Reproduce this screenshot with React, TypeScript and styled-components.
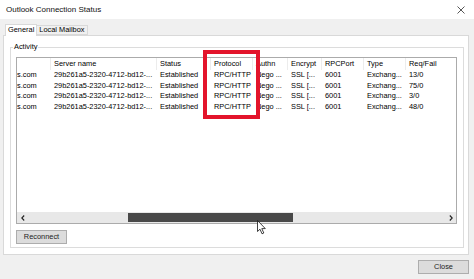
import React from "react";
import styled, { createGlobalStyle } from "styled-components";

const Global = createGlobalStyle`
  html, body { margin: 0; padding: 0; background: #f0f0f0; }
  body { width: 474px; height: 279px; overflow: hidden; font-family: "Liberation Sans", Arial, sans-serif; }
  * { box-sizing: border-box; }
`;

const COLS = "33px 106px 54px 42px 35px 34px 42px 42px 1fr";

const Window = styled.div`
  width: 474px;
  height: 279px;
  display: flex;
  flex-direction: column;
  background: #f0f0f0;
  color: #000;
  font-size: 7.4px;
  position: relative;
  overflow: hidden;
`;

const TitleBar = styled.div`
  height: 19px;
  flex: none;
  background: #fff;
  display: flex;
  align-items: center;
  justify-content: space-between;
  padding: 0 9px 0 6px;
`;

const Title = styled.span`
  font-size: 8px;
  line-height: 10px;
  color: #111;
  margin-top: 1px;
`;

const Body = styled.div`
  padding: 5px 5px 0 3px;
  display: flex;
  flex-direction: column;
`;

const TabStrip = styled.div`
  display: flex;
  align-items: flex-end;
  height: 11px;
  padding-left: 2px;
  position: relative;
  z-index: 1;
`;

const Tab = styled.div<{ $active?: boolean }>`
  height: ${(p) => (p.$active ? "12px" : "10px")};
  margin-bottom: ${(p) => (p.$active ? "-1px" : "0")};
  margin-left: ${(p) => (p.$active ? "0" : "-1px")};
  padding: 0 2px;
  border: 1px solid #d9d9d9;
  border-bottom: ${(p) => (p.$active ? "none" : "1px solid #d9d9d9")};
  background: ${(p) => (p.$active ? "#fff" : "#f0f0f0")};
  line-height: ${(p) => (p.$active ? "10px" : "8px")};
  white-space: nowrap;
`;

const Panel = styled.div`
  border: 1px solid #d9d9d9;
  background: #fff;
  padding: 6px 4px 6px 6px;
`;

const Group = styled.fieldset`
  margin: 0;
  min-width: 0;
  border: 1px solid #dcdcdc;
  padding: 5px 6px 3px 5px;
`;

const Legend = styled.legend`
  padding: 0 1px;
  margin-left: -3px;
  line-height: 10px;
  font-size: 7.4px;
`;

const List = styled.div`
  height: 167px;
  border: 1px solid #ababab;
  background: #fff;
  display: flex;
  flex-direction: column;
  overflow: hidden;
`;

const HeaderRow = styled.div`
  display: grid;
  grid-template-columns: ${COLS};
  height: 12px;
  flex: none;
`;

const HeaderCell = styled.div<{ $first?: boolean }>`
  padding-left: ${(p) => (p.$first ? "0" : "3px")};
  border-left: ${(p) => (p.$first ? "none" : "1px solid #ececec")};
  line-height: 12px;
  white-space: nowrap;
  overflow: hidden;
`;

const Row = styled.div`
  display: grid;
  grid-template-columns: ${COLS};
  height: 10.5px;
  flex: none;
`;

const Cell = styled.div<{ $first?: boolean }>`
  padding-left: ${(p) => (p.$first ? "0" : "4px")};
  line-height: 10.5px;
  white-space: nowrap;
  overflow: hidden;
`;

const Scrollbar = styled.div`
  margin-top: auto;
  height: 11px;
  flex: none;
  display: flex;
  background: #e8e8e8;
`;

const Arrow = styled.div`
  width: 11px;
  display: flex;
  align-items: center;
  justify-content: center;
`;

const Track = styled.div`
  flex: 1;
  display: flex;
  align-items: stretch;
  padding: 1px 0;
`;

const Thumb = styled.div<{ $offset: number; $size: number }>`
  margin-left: ${(p) => p.$offset}px;
  width: ${(p) => p.$size}px;
  background: #494949;
`;

const Button = styled.button<{ $width?: number }>`
  width: ${(p) => p.$width ?? 51}px;
  height: 14px;
  border: 1px solid #adadad;
  background: #dcdcdc;
  font-family: "Liberation Sans", Arial, sans-serif;
  font-size: 7.4px;
  color: #222;
  padding: 0;
  line-height: 12px;
`;

const ReconnectButton = styled(Button)`
  margin-top: 6px;
  display: block;
`;

const Footer = styled.div`
  display: flex;
  justify-content: flex-end;
  padding: 5px 5px 0 0;
`;

const Highlight = styled.div`
  position: absolute;
  left: 203px;
  top: 50px;
  width: 57px;
  height: 69px;
  border: 4px solid #e3142b;
  pointer-events: none;
`;

const Cursor = styled.svg`
  position: absolute;
  left: 257px;
  top: 220px;
`;

const headers = ["", "Server name", "Status", "Protocol", "Authn", "Encrypt", "RPCPort", "Type", "Req/Fail"];
const reqs = ["13/0", "75/0", "3/0", "48/0"];

export default function App() {
  return (
    <Window>
      <Global />
      <TitleBar>
        <Title>Outlook Connection Status</Title>
        <svg width="8" height="8" viewBox="0 0 8 8">
          <path d="M0.5 0.5 L7.5 7.5 M7.5 0.5 L0.5 7.5" stroke="#444" strokeWidth="0.9" fill="none" />
        </svg>
      </TitleBar>
      <Body>
        <TabStrip>
          <Tab $active>General</Tab>
          <Tab>Local Mailbox</Tab>
        </TabStrip>
        <Panel>
          <Group>
            <Legend>Activity</Legend>
            <List>
              <HeaderRow>
                {headers.map((h, i) => (
                  <HeaderCell key={i} $first={i === 0}>
                    {h}
                  </HeaderCell>
                ))}
              </HeaderRow>
              {reqs.map((r) => (
                <Row key={r}>
                  <Cell $first>s.com</Cell>
                  <Cell>29b261a5-2320-4712-bd12-...</Cell>
                  <Cell>Established</Cell>
                  <Cell>RPC/HTTP</Cell>
                  <Cell>Nego ...</Cell>
                  <Cell>SSL [...</Cell>
                  <Cell>6001</Cell>
                  <Cell>Exchang...</Cell>
                  <Cell>{r}</Cell>
                </Row>
              ))}
              <Scrollbar>
                <Arrow>
                  <svg width="4" height="6" viewBox="0 0 4 6">
                    <path d="M3.2 0.5 L0.8 3 L3.2 5.5" stroke="#222" strokeWidth="1.1" fill="none" />
                  </svg>
                </Arrow>
                <Track>
                  <Thumb $offset={100} $size={165} />
                </Track>
                <Arrow>
                  <svg width="4" height="6" viewBox="0 0 4 6">
                    <path d="M0.8 0.5 L3.2 3 L0.8 5.5" stroke="#222" strokeWidth="1.1" fill="none" />
                  </svg>
                </Arrow>
              </Scrollbar>
            </List>
            <ReconnectButton>Reconnect</ReconnectButton>
          </Group>
        </Panel>
      </Body>
      <Footer>
        <Button>Close</Button>
      </Footer>
      <Highlight />
      <Cursor width="10" height="15" viewBox="0 0 10 15">
        <path d="M0.5 0.5 L0.5 11.5 L3 9.2 L5 13.8 L6.8 13 L4.8 8.6 L8.3 8.6 Z" fill="#fff" stroke="#111" strokeWidth="0.8" />
      </Cursor>
    </Window>
  );
}
